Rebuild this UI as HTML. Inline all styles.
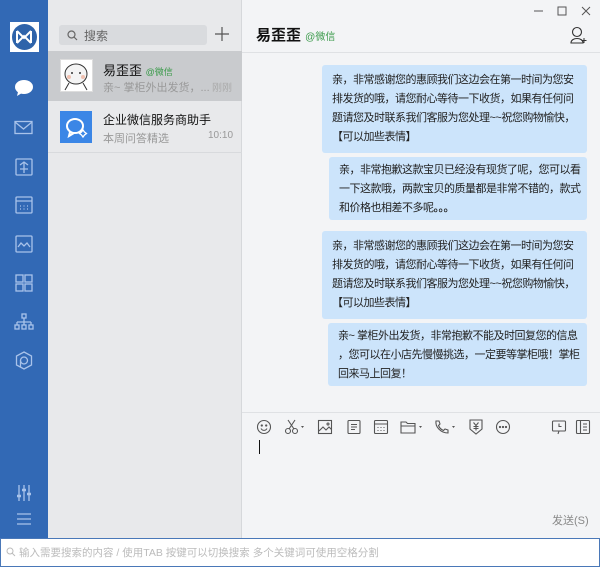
<!DOCTYPE html>
<html><head><meta charset="utf-8">
<style>
*{margin:0;padding:0;box-sizing:border-box}
body{width:600px;height:567px;overflow:hidden;position:relative;background:#f3f4f6;font-family:"Liberation Sans","Noto Sans CJK SC",sans-serif;font-size:12px;color:#222}
.abs{position:absolute}
#side{left:0;top:0;width:48px;height:540px;background:#3269b5}
#list{left:48px;top:0;width:194px;height:540px;background:#e8e9eb;border-right:1px solid #d6d8db}
#chat{left:242px;top:0;width:358px;height:540px;background:#f3f4f6}
.bub{position:absolute;background:#cce4fb;border-radius:3px;padding:6px 0 6px 10px;line-height:19px;font-size:11px;letter-spacing:-0.5px;color:#222;right:13px;word-break:break-all}
.bub div{width:244px}
svg.ic{position:absolute;fill:none;stroke:#a9c3ea;stroke-width:1.3}
svg.tb{position:absolute;fill:none;stroke:#555;stroke-width:1.1}
</style></head><body>
<div id="side" class="abs">
 <div class="abs" style="left:10px;top:22px;width:29px;height:30px;background:#fff"></div>
 <div class="abs" style="left:12px;top:24px;width:25px;height:26px;border-radius:50%;background:#2e63aa"></div>
 <svg class="abs" style="left:14px;top:28px" width="21" height="18" viewBox="0 0 21 18"><path d="M3 3 L10 10 L17 3 M3 3 V15 M17 3 V15 M3 15 L10 8 L17 15" stroke="#fff" stroke-width="2" fill="none"/></svg>
 <svg class="abs" style="left:14px;top:79px" width="20" height="18" viewBox="0 0 20 18"><ellipse cx="10" cy="8" rx="9" ry="7" fill="#fff"/><path d="M4 13 L3 17 L8 14Z" fill="#fff"/></svg>
 <svg class="ic" style="left:14px;top:120px" width="20" height="16"><rect x="1" y="1.5" width="17" height="12"/><path d="M1 2 L9.5 9 L18 2"/></svg>
 <svg class="ic" style="left:15px;top:158px" width="18" height="18"><rect x="1" y="1" width="16" height="16" rx="1"/><path d="M5 7 L9 4 L13 7 M9 4 V15 M5 11 H13"/></svg>
 <svg class="ic" style="left:15px;top:196px" width="18" height="18"><rect x="1" y="1" width="16" height="16" rx="1"/><path d="M1 5 H17 M5 10 H6 M8.5 10 H9.5 M12 10 H13 M5 13 H6 M8.5 13 H9.5 M12 13 H13"/></svg>
 <svg class="ic" style="left:15px;top:235px" width="18" height="18"><rect x="1" y="1" width="16" height="16" rx="1"/><path d="M3 12 L6 8 L9 11 L12 8 L15 12"/></svg>
 <svg class="ic" style="left:15px;top:274px" width="18" height="18"><rect x="1" y="1" width="7" height="7"/><rect x="10" y="1" width="7" height="7"/><rect x="1" y="10" width="7" height="7"/><rect x="10" y="10" width="7" height="7"/></svg>
 <svg class="ic" style="left:14px;top:313px" width="20" height="18"><rect x="8" y="1" width="4" height="4"/><path d="M10 5 V9 M3 9 H17 M3 9 V12 M10 9 V12 M17 9 V12"/><rect x="1" y="12" width="4" height="4"/><rect x="8" y="12" width="4" height="4"/><rect x="15" y="12" width="4" height="4"/></svg>
 <svg class="ic" style="left:15px;top:351px" width="18" height="19"><path d="M9 1 L16.5 5 V14 L9 18 L1.5 14 V5Z"/><circle cx="9" cy="9.5" r="3.5"/><path d="M5.5 9.5 V16"/></svg>
 <svg class="ic" style="left:16px;top:484px" width="16" height="18"><path d="M3 1 V17 M8 1 V17 M13 1 V17"/><path d="M1 12 H5 M6 6 H10 M11 10 H15" stroke-width="2.5"/></svg>
 <svg class="ic" style="left:16px;top:512px" width="16" height="14"><path d="M1 2 H15 M1 7 H15 M1 12 H15"/></svg>
</div>
<div id="list" class="abs">
 <div class="abs" style="left:11px;top:25px;width:148px;height:20px;background:#d9dbde;border-radius:3px"></div>
 <svg class="abs" style="left:19px;top:30px" width="11" height="11"><circle cx="4.5" cy="4.5" r="3.5" stroke="#666" fill="none" stroke-width="1.2"/><path d="M7 7 L10 10" stroke="#666" stroke-width="1.2"/></svg>
 <div class="abs" style="left:36px;top:27px;font-size:12px;color:#666">搜索</div>
 <svg class="abs" style="left:167px;top:27px" width="14" height="14"><path d="M7 0 V14 M0 7 H14" stroke="#555" stroke-width="1.2"/></svg>
 <div class="abs" style="left:0;top:51px;width:194px;height:50px;background:#c9cbce"></div>
 <div class="abs" style="left:12px;top:59px;width:33px;height:33px;background:#fff;border:1px solid #ddd"></div>
 <svg class="abs" style="left:13px;top:60px" width="31" height="31"><ellipse cx="15" cy="14" rx="11" ry="10" fill="#f4f4f4" stroke="#333" stroke-width="1"/><circle cx="11" cy="13" r="1" fill="#333"/><circle cx="19" cy="13" r="1" fill="#333"/><circle cx="8" cy="17" r="2" fill="#f0c0b0"/><circle cx="22" cy="17" r="2" fill="#f0c0b0"/><path d="M8 23 L4 30 M22 23 L26 30" stroke="#333"/></svg>
 <div class="abs" style="left:55px;top:60px;font-size:13px;color:#111">易歪歪 <span style="font-size:9px;color:#3a9a4a">@微信</span></div>
 <div class="abs" style="left:55px;top:79px;font-size:11px;color:#999">亲~ 掌柜外出发货，...</div>
 <div class="abs" style="left:164px;top:79px;font-size:10px;color:#aaa">刚刚</div>
 <div class="abs" style="left:12px;top:111px;width:32px;height:32px;background:#3b86e6"></div>
 <svg class="abs" style="left:14px;top:113px" width="28" height="28"><ellipse cx="13" cy="13" rx="8" ry="7" fill="none" stroke="#fff" stroke-width="2"/><path d="M8 19 L7 23 L12 20" fill="none" stroke="#fff" stroke-width="2"/><path d="M21 17 l1.5 2 l2 1.5 l-2 1.5 l-1.5 2 l-1.5 -2 l-2 -1.5 l2 -1.5z" fill="#3b86e6" stroke="#fff" stroke-width="1.3"/></svg>
 <div class="abs" style="left:55px;top:111px;font-size:12px;color:#111">企业微信服务商助手</div>
 <div class="abs" style="left:55px;top:130px;font-size:11px;color:#999">本周问答精选</div>
 <div class="abs" style="left:160px;top:130px;font-size:10px;color:#999">10:10</div>
 <div class="abs" style="left:0;top:152px;width:194px;height:1px;background:#d8dadd"></div>
</div>
<div id="chat" class="abs">
 <svg class="abs" style="left:292px;top:6px" width="60" height="10"><path d="M0 5 H9" stroke="#555"/><rect x="24" y="1" width="8" height="8" stroke="#555" fill="none"/><path d="M48 1 L56 9 M56 1 L48 9" stroke="#555"/></svg>
 <div class="abs" style="left:14px;top:24px;font-size:15px;font-weight:bold;color:#111">易歪歪 <span style="font-size:10px;font-weight:normal;color:#3a9a4a">@微信</span></div>
 <svg class="abs" style="left:328px;top:26px" width="17" height="18"><circle cx="7" cy="6" r="4.5" stroke="#333" fill="none" stroke-width="1.1"/><path d="M1 17 C1 11 13 11 13 17Z" stroke="#333" fill="none" stroke-width="1.1"/><path d="M14 12 V17 M11.5 14.5 H16.5" stroke="#333"/></svg>
 <div class="abs" style="left:0;top:52px;width:358px;height:1px;background:#dfe1e4"></div>
 <div class="bub" style="top:65px;width:265px"><div>亲，非常感谢您的惠顾我们这边会在第一时间为您安排发货的哦，请您耐心等待一下收货，如果有任何问题请您及时联系我们客服为您处理~~祝您购物愉快，<br>【可以加些表情】</div></div>
 <div class="bub" style="top:157px;width:258px;height:63px;padding-top:4px"><div>亲，非常抱歉这款宝贝已经没有现货了呢，您可以看一下这款哦，两款宝贝的质量都是非常不错的，款式和价格也相差不多呢<b>。。。</b></div></div>
 <div class="bub" style="top:231px;width:265px"><div>亲，非常感谢您的惠顾我们这边会在第一时间为您安排发货的哦，请您耐心等待一下收货，如果有任何问题请您及时联系我们客服为您处理~~祝您购物愉快，<br>【可以加些表情】</div></div>
 <div class="bub" style="top:323px;width:259px;height:63px;padding-top:4px"><div style="width:250px">亲~ 掌柜外出发货，非常抱歉不能及时回复您的信息<br>，您可以在小店先慢慢挑选，一定要等掌柜哦！掌柜回来马上回复！</div></div>
 <div class="abs" style="left:0;top:412px;width:358px;height:1px;background:#dfe1e4"></div>
 <svg class="tb" style="left:14px;top:419px" width="16" height="16"><circle cx="8" cy="8" r="6.5"/><circle cx="5.8" cy="6.5" r=".6"/><circle cx="10.2" cy="6.5" r=".6"/><path d="M5 9.5 C6.5 12 9.5 12 11 9.5"/></svg>
 <svg class="tb" style="left:42px;top:419px" width="22" height="16"><circle cx="4" cy="12" r="2.5"/><circle cx="11" cy="12" r="2.5"/><path d="M5 10 L11 1 M10 10 L4 1"/><path d="M17 7 h3 l-1.5 2z" fill="#555" stroke="none"/></svg>
 <svg class="tb" style="left:75px;top:419px" width="16" height="16"><rect x="1.5" y="1.5" width="13" height="13"/><path d="M2 12 L6 8 L9 11 L12 8 L14.5 10.5"/><circle cx="11" cy="5" r="1"/></svg>
 <svg class="tb" style="left:104px;top:419px" width="16" height="16"><rect x="2" y="1.5" width="12" height="13" rx="1"/><path d="M5 5.5 H11 M5 8 H11 M5 10.5 H9"/></svg>
 <svg class="tb" style="left:131px;top:419px" width="16" height="16"><rect x="1.5" y="1.5" width="13" height="13" rx="1"/><path d="M1.5 5 H14.5 M4.5 8.5 h1 M7.5 8.5 h1 M10.5 8.5 h1 M4.5 11.5 h1 M7.5 11.5 h1 M10.5 11.5 h1"/></svg>
 <svg class="tb" style="left:158px;top:419px" width="24" height="16"><path d="M1 3 H6 L7.5 4.5 H15 V14 H1Z M1 7 H15"/><path d="M19 7 h3 l-1.5 2z" fill="#555" stroke="none"/></svg>
 <svg class="tb" style="left:191px;top:419px" width="24" height="16"><path d="M3 2 L6 2 L7 5 L5.5 6.5 C6.5 9 8 10.5 10.5 11.5 L12 10 L15 11 L15 14 C8 14 2 8 3 2Z"/><path d="M19 7 h3 l-1.5 2z" fill="#555" stroke="none"/></svg>
 <svg class="tb" style="left:226px;top:418px" width="16" height="18"><path d="M2 2 H14 V11 L8 16 L2 11Z"/><path d="M5.5 4.5 L8 7.5 L10.5 4.5 M8 7.5 V12.5 M5.5 8.5 H10.5 M5.5 10.5 H10.5"/></svg>
 <svg class="tb" style="left:253px;top:419px" width="16" height="16"><circle cx="8" cy="8" r="6.5"/><circle cx="5" cy="8" r=".6"/><circle cx="8" cy="8" r=".6"/><circle cx="11" cy="8" r=".6"/></svg>
 <svg class="tb" style="left:309px;top:419px" width="16" height="16"><rect x="1.5" y="2" width="13" height="10" rx="1"/><path d="M7 15 L8 12 M8 4.5 V7.5 H10.5"/></svg>
 <svg class="tb" style="left:333px;top:419px" width="16" height="16"><rect x="1.5" y="1.5" width="13" height="13" rx="1"/><path d="M5.5 1.5 V14.5 M8 5 H12 M8 8 H12 M8 11 H12"/></svg>
 <div class="abs" style="left:17px;top:440px;width:1px;height:14px;background:#111"></div>
 <div class="abs" style="left:310px;top:512px;font-size:11px;color:#888">发送(S)</div>
</div>
<div class="abs" style="left:0;top:538px;width:600px;height:29px;background:#fff;border:1px solid #4a78b8"></div>
<svg class="abs" style="left:6px;top:547px" width="10" height="10"><circle cx="4" cy="4" r="3" stroke="#bbb" fill="none"/><path d="M6 6 L9 9" stroke="#bbb"/></svg>
<div class="abs" style="left:19px;top:545px;font-size:10.5px;color:#bbb">输入需要搜索的内容 / 使用TAB 按键可以切换搜索 多个关键词可使用空格分割</div>
</body></html>
